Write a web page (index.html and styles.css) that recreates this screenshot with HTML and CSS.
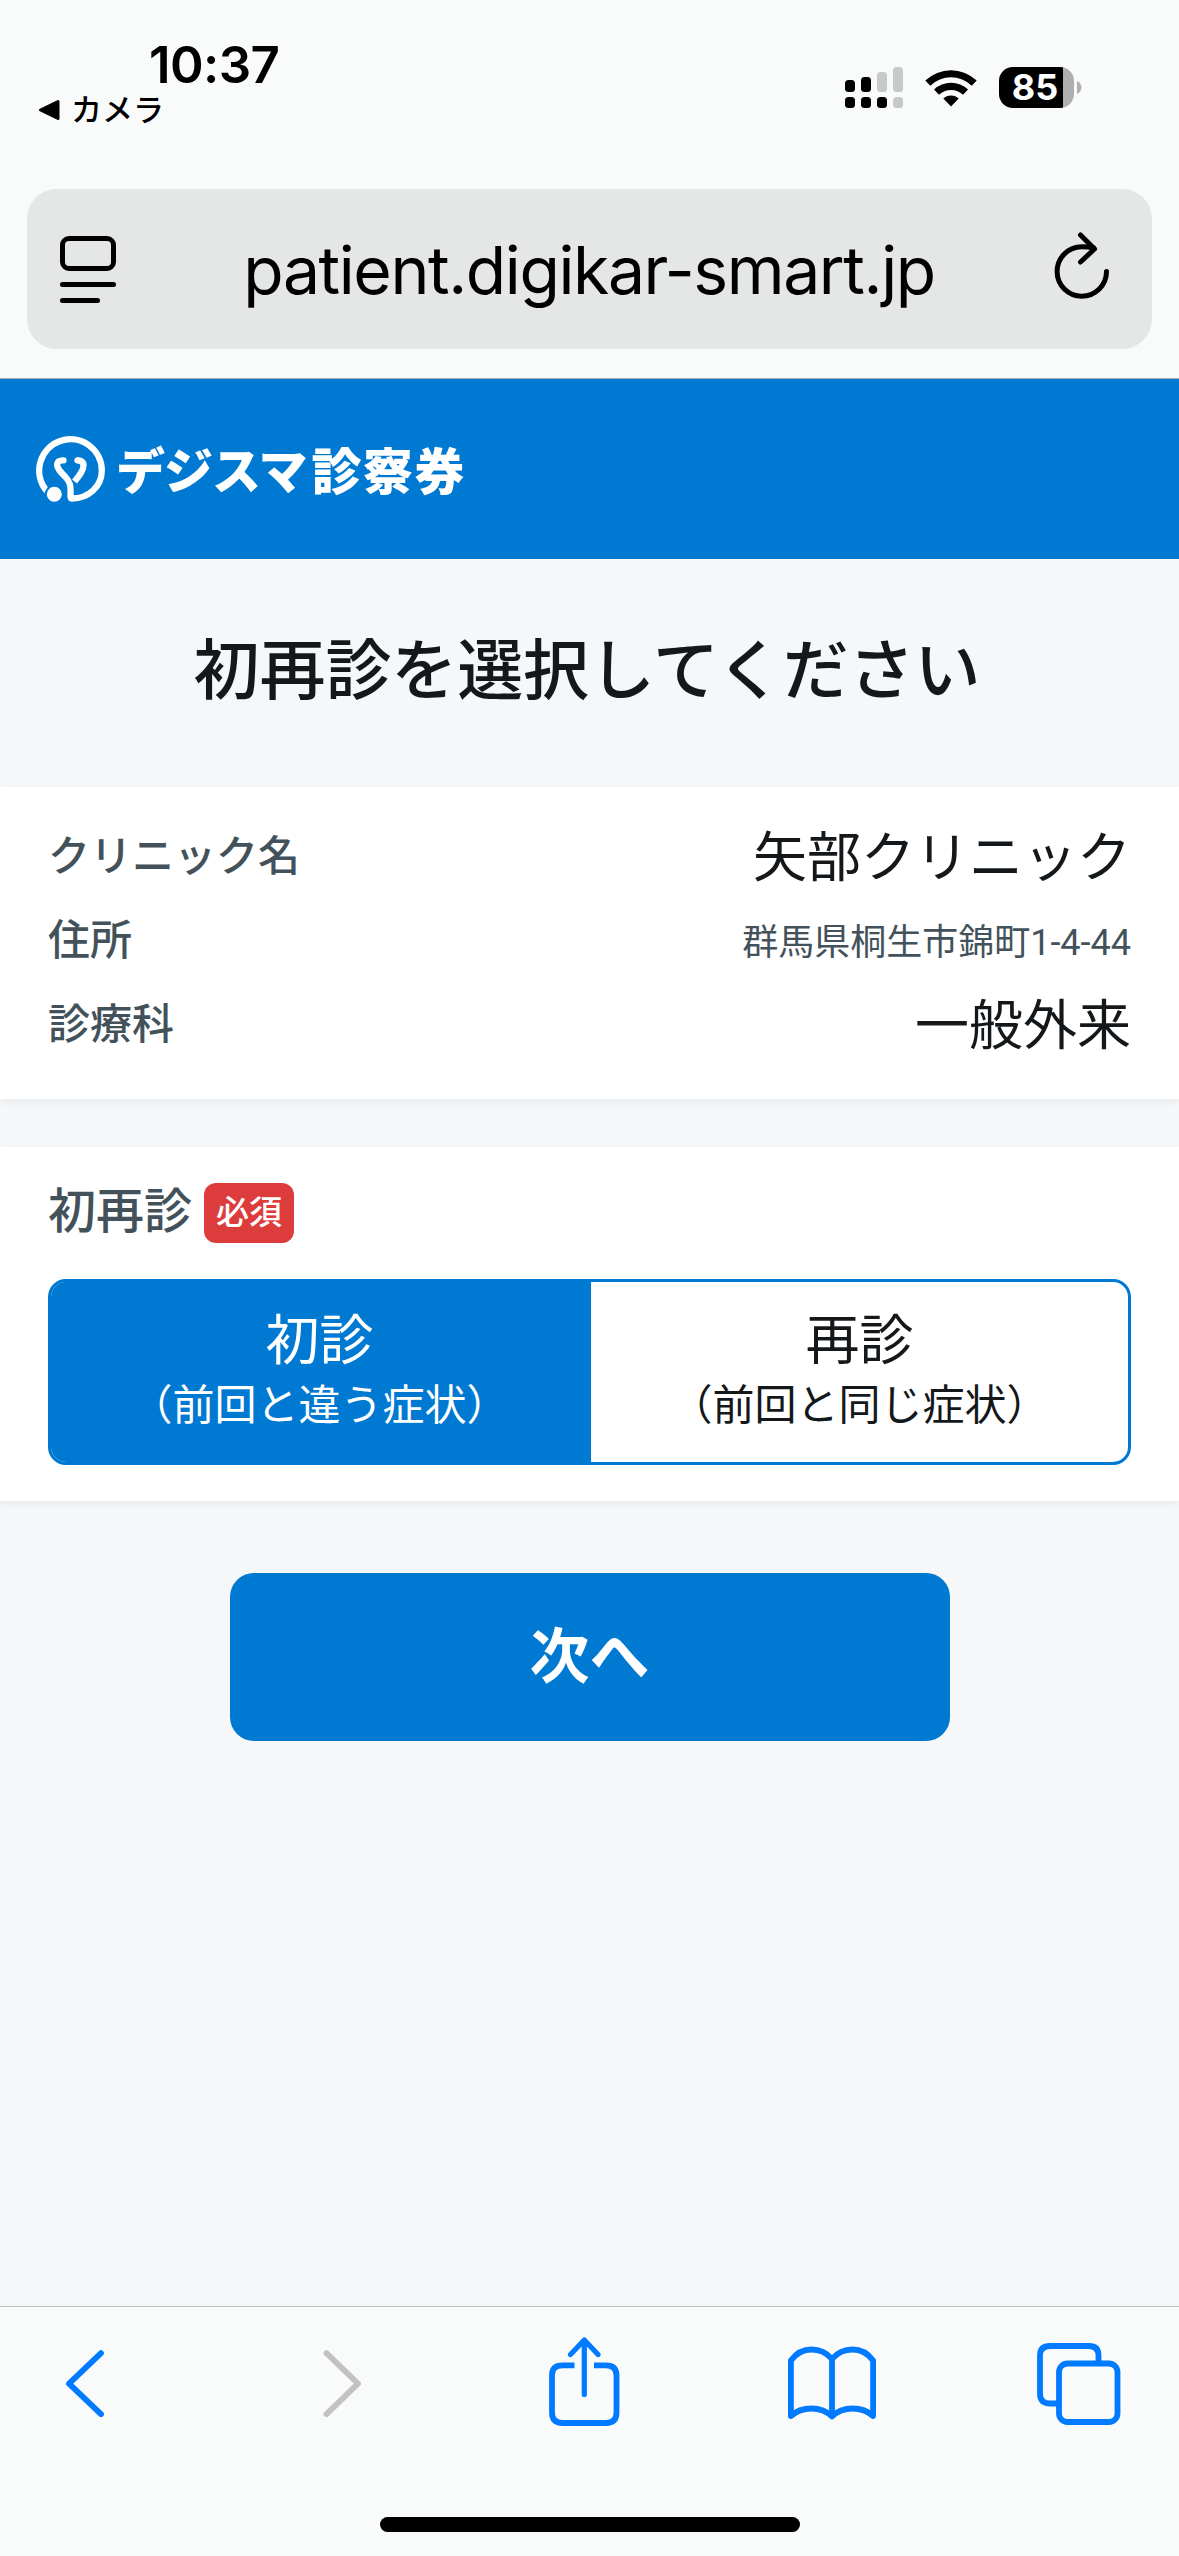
FILE: index.html
```html
<!DOCTYPE html>
<html lang="ja">
<head>
<meta charset="utf-8">
<title>デジスマ診察券</title>
<link rel="stylesheet" href="styles.css">
</head>
<body>
<div class="screen">
  <header class="browser-top">
    <div class="status">
      <div class="status-left">
        <div class="clock">10:37</div>
        <div class="back-app">
          <svg width="22" height="22" viewBox="0 0 22 22"><path d="M20 2.5v17L2.5 11z" fill="#000" stroke="#000" stroke-width="3" stroke-linejoin="round"/></svg>
          <span>カメラ</span>
        </div>
      </div>
      <div class="status-right">
        <svg class="signal" width="58" height="41" viewBox="0 0 58 41">
          <g fill="#000"><rect y="13" width="10" height="12" rx="3.5"/><rect x="16" y="10" width="10" height="15" rx="3.5"/><rect y="30" width="10" height="11" rx="3.5"/><rect x="16" y="30" width="10" height="11" rx="3.5"/><rect x="32" y="30" width="10" height="11" rx="3.5"/></g>
          <g fill="#c8c9c9"><rect x="32" y="5" width="10" height="20" rx="3.5"/><rect x="48" width="10" height="25" rx="3.5"/><rect x="48" y="30" width="10" height="11" rx="3.5"/></g>
        </svg>
        <svg class="wifi" width="52" height="38" viewBox="0 0 52 38">
          <path d="M26 37.5 18.3 29.6a11 11 0 0 1 15.4 0z"/>
          <path d="M9 20.6a24.5 24.5 0 0 1 34 0l-5 5.2a17.2 17.2 0 0 0-24 0z"/>
          <path d="M.3 11.6a37 37 0 0 1 51.4 0l-5 5.1a29.8 29.8 0 0 0-41.4 0z"/>
        </svg>
        <div class="battery"><span>85</span></div>
        <svg width="5" height="13" viewBox="0 0 5 13"><path d="M0 0c6 3 6 10 0 13z" fill="#afafb0"/></svg>
      </div>
    </div>
    <div class="address-bar">
      <svg width="56" height="67" viewBox="0 0 56 67" fill="none" stroke="#000" stroke-width="5" stroke-linecap="round"><rect x="2.5" y="2.5" width="51" height="30" rx="6.5"/><path d="M2.500 48.500h51M2.500 64.500h35"/></svg>
      <span class="url">patient.digikar-smart.jp</span>
      <svg class="reload" width="56" height="68" viewBox="0 0 56 68" fill="none" stroke="#000" stroke-width="5" stroke-linecap="round" stroke-linejoin="round"><path d="M52.500 39.500a24.700 24.700 0 1 1-24.700-24.700q6 0 12 1.200"/><path d="M26.500 3 40.500 17 26.500 30"/></svg>
    </div>
  </header>

  <div class="brand">
    <svg class="brand-mark" width="70" height="68" viewBox="0 0 70 68" fill="none" stroke="#fff" stroke-width="6.300" stroke-linecap="round">
      <path d="M10 55A31.300 31.300 0 1 1 65.800 35.500C65.800 51.500 52.500 63.500 36 63.500Q34.500 63.500 34.500 61C35 50 34 47 29.500 42C24.500 37 20.500 33 21.200 29C21.800 25.500 24.500 25.200 27.500 25.300"/>
      <path d="M41.500 25.300C45.500 25.200 47.300 27 47.500 30C47.800 35 44 40 38.500 46.500" stroke-linecap="butt"/>
      <circle cx="41.500" cy="25.300" r="3.150" fill="#fff" stroke="none"/>
      <circle cx="18.300" cy="59.300" r="9.500" fill="#0079d3" stroke="none"/>
      <circle cx="18.300" cy="59.300" r="7.500" fill="#fff" stroke="none"/>
    </svg>
    <div class="brand-name"><span class="kana">デジスマ</span><span class="kanji">診察券</span></div>
  </div>

  <main>
    <h1>初再診を選択してください</h1>
    <section class="card clinic">
      <dl>
        <div><dt>クリニック名</dt><dd>矢部クリニック</dd></div>
        <div><dt>住所</dt><dd class="small">群馬県桐生市錦町1-4-44</dd></div>
        <div><dt>診療科</dt><dd>一般外来</dd></div>
      </dl>
    </section>
    <section class="card visit">
      <div class="field-head"><span class="field-label">初再診</span><span class="required">必須</span></div>
      <div class="toggle">
        <div class="option selected"><span class="opt-title">初診</span><span class="opt-note">（前回と違う症状）</span></div>
        <div class="option"><span class="opt-title">再診</span><span class="opt-note">（前回と同じ症状）</span></div>
      </div>
    </section>
    <button class="next">次へ</button>
  </main>

  <footer class="toolbar">
    <div class="tools">
      <svg class="back" width="40" height="68" viewBox="0 0 40 68" stroke="#007aff"><path d="M36 3.200 4 33.700 36 64.200"/></svg>
      <svg class="forward" width="40" height="68" viewBox="0 0 40 68" stroke="#c2c2c2"><path d="M4.500 3.200 36 33.700 4.500 64.200"/></svg>
      <svg class="share" width="71" height="90" viewBox="0 0 71 90" stroke="#007aff"><path d="M25.500 28.300H13.500Q3 28.300 3 38.500V75.500Q3 86 13.500 86H57Q67.500 86 67.500 75.500V38.500Q67.500 28.300 57 28.300H45" stroke-linecap="butt"/><path d="M35.300 4V57.500M21.500 17.500 35.300 3 49 17.500" stroke-width="5.200"/></svg>
      <svg class="book" width="88" height="74" viewBox="0 0 88 74" stroke="#007aff"><path d="M44 13Q36 3.500 23.500 3.500T2.900 14.500V70Q11 62.500 23.500 62.500T44 70.500Q52 62.500 64.500 62.500T85.100 70V14.500Q77 3.500 64.500 3.500T44 13V70"/></svg>
      <svg class="tabs" width="84" height="84" viewBox="0 0 84 84" stroke="#007aff"><rect x="22" y="21.500" width="58.500" height="58.500" rx="8.500"/><path d="M61.500 19V13.500Q61.500 4 52 4H13Q3 4 3 13.500V51.500Q3 61.500 13 61.500H20" stroke-linecap="butt"/></svg>
    </div>
    <div class="home-indicator"></div>
  </footer>
</div>
</body>
</html>
```

FILE: styles.css
```css
* { box-sizing: border-box; }
body { margin: 0; background: #f5f7f9; font-family: Roboto, "Noto Sans CJK JP", sans-serif; color: #14181b; }
svg { display: block; flex: none; }
.screen { width: 1179px; height: 2556px; display: flex; flex-direction: column; overflow: hidden; }

.browser-top { height: 379px; flex: none; background: #f9fbfb; border-bottom: 1px solid #a6adb3; font-family: Inter, "Noto Sans CJK JP", sans-serif; color: #000; }
.status { height: 189px; display: flex; justify-content: space-between; padding: 34px 97px 0 38px; }
.clock { margin-left: 111px; font-size: 51px; line-height: 62px; font-weight: 600; letter-spacing: -.6px; }
.back-app { display: flex; align-items: center; gap: 11px; height: 30px; margin-top: -1px; font-size: 31px; line-height: 30px; font-weight: 500; }
.status-right { display: flex; align-items: center; height: 41px; margin-top: 33px; }
.wifi { margin: 0 22px; fill: #000; }
.battery { width: 75px; height: 41px; margin-right: 3px; padding-right: 3px; border-radius: 14px; background: linear-gradient(90deg, #000 64px, #afafb0 64px); color: #fff; display: flex; align-items: center; justify-content: center; font-size: 36px; line-height: 41px; font-weight: 700; }

.address-bar { margin: 0 27px; height: 160px; border-radius: 30px; background: #e5e6e6; display: flex; align-items: center; justify-content: space-between; padding: 0 42px 0 33px; }
.url { font-size: 66px; line-height: 80px; white-space: nowrap; letter-spacing: -1.4px; padding: 1px 0 0 8px; }
.reload { margin-bottom: 6px; }

.brand { height: 180px; flex: none; background: #0079d3; color: #fff; display: flex; align-items: center; padding: 0 35px 0 36px; }
.brand-name { display: flex; align-items: center; margin: 0 0 2px 10px; font-weight: 900; line-height: 60px; font-family: "Noto Sans CJK JP", sans-serif; }
.kana { font-size: 49px; letter-spacing: -1px; }
.kanji { font-size: 50px; letter-spacing: 1.5px; margin-left: 5px; }

main { flex: 1; display: flex; flex-direction: column; }
h1 { margin: 0; height: 228px; font-size: 66px; line-height: 96px; padding: 65px 5px 0 0; font-weight: 500; text-align: center; letter-spacing: -.1px; }
.card { background: #fff; box-shadow: 0 3px 8px rgba(20, 30, 40, .06); padding: 0 48px; }
.clinic { height: 312px; padding-top: 27px; }
dl { margin: 0; }
dl > div { height: 84px; display: flex; align-items: center; justify-content: space-between; }
dt { color: #43525a; font-size: 42px; line-height: 62px; padding-top: 1px; font-weight: 500; }
dd { margin: 0; font-size: 54px; line-height: 80px; padding-top: 6px; }
dd.small { color: #43525a; font-size: 36px; line-height: 52px; padding-top: 6px; }
.visit { height: 354px; margin-top: 48px; padding-top: 36px; }
.field-head { height: 60px; display: flex; align-items: center; gap: 12px; }
.field-label { color: #43525a; font-size: 48px; line-height: 60px; padding-bottom: 3px; font-weight: 500; }
.required { width: 90px; height: 60px; border-radius: 12px; background: #dc3c3c; color: #fff; font-size: 33px; line-height: 60px; text-align: center; font-weight: 500; }
.toggle { height: 186px; margin-top: 36px; border: 3px solid #0079d3; border-radius: 18px; display: flex; overflow: hidden; }
.option { flex: 1; display: flex; flex-direction: column; align-items: center; padding-top: 22px; white-space: nowrap; }
.selected { flex: none; width: 540px; padding-right: 3px; background: #0079d3; color: #fff; }
.opt-title { font-size: 54px; line-height: 76px; }
.opt-note { font-size: 42px; line-height: 56px; margin-top: -2px; }
.next { width: 720px; height: 168px; margin: 72px auto 0; padding: 0 0 10px; border: 0; border-radius: 24px; background: #0079d3; color: #fff; font: 700 60px/90px "Noto Sans CJK JP", sans-serif; }

.toolbar { height: 250px; flex: none; background: #f9fbfb; border-top: 1px solid #bfc2c3; display: flex; flex-direction: column; align-items: center; }
.tools { width: 100%; height: 210px; display: flex; align-items: flex-start; padding: 43px 58px 0 65px; }
.tools svg { fill: none; stroke-width: 5.8; stroke-linecap: round; stroke-linejoin: round; }
.tools .forward { margin-left: 217px; }
.tools .share { margin: -13px 0 0 187px; }
.tools .book { margin: -4px 0 0 168px; }
.tools .tabs { margin: -8px 0 0 161px; }
.home-indicator { width: 420px; height: 15px; border-radius: 8px; background: #000; }
```
